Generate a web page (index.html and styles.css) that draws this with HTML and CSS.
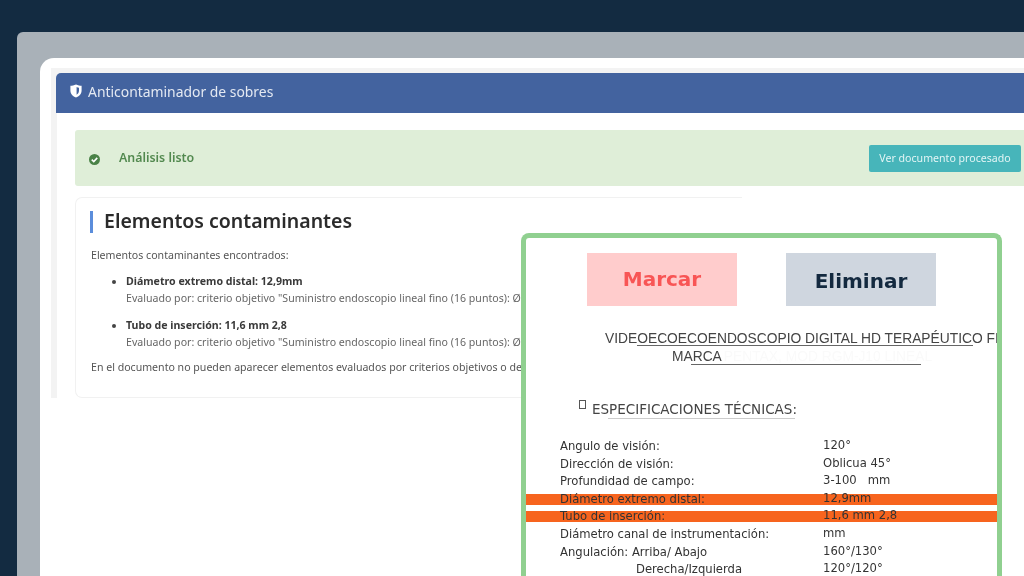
FILE: index.html
```html
<!DOCTYPE html>
<html lang="es">
<head>
<meta charset="utf-8">
<title>Anticontaminador de sobres</title>
<link rel="stylesheet" href="styles.css">
</head>
<body>
<div class="backdrop">
  <div class="sheet">
    <div class="frame">
      <header class="bar">
        <svg class="shield soft" viewBox="0 0 12 14" width="12" height="14"><path d="M6 0.5 C8 1.4 10 1.8 11.6 1.8 V6.5 C11.6 10 9 12.4 6 13.5 C3 12.4 0.4 10 0.4 6.5 V1.8 C2 1.8 4 1.4 6 0.5Z" fill="#fff"/><path d="M6.6 3 C7.4 3.4 8.2 3.7 9 3.8 V6.5 C9 8.6 7.8 10 6.6 10.8Z" fill="#43639f"/></svg>
        <span class="soft">Anticontaminador de sobres</span>
      </header>
      <main class="content">
        <section class="alert">
          <svg class="check soft" viewBox="0 0 12 12" width="11" height="11"><circle cx="6" cy="6" r="6" fill="#4a8247"/><path d="M3 6.2 L5.2 8.3 L9 4.2" fill="none" stroke="#fff" stroke-width="1.7"/></svg>
          <span class="alert-text soft">Análisis listo</span>
          <button class="view-btn soft">Ver documento procesado</button>
        </section>
        <section class="card">
          <h2 class="card-title soft">Elementos contaminantes</h2>
          <p class="intro soft">Elementos contaminantes encontrados:</p>
          <ul class="items soft">
            <li><strong>Diámetro extremo distal: 12,9mm</strong><span>Evaluado por: criterio objetivo "Suministro endoscopio lineal fino (16 puntos): Ø</span></li>
            <li><strong>Tubo de inserción: 11,6 mm 2,8</strong><span>Evaluado por: criterio objetivo "Suministro endoscopio lineal fino (16 puntos): Ø</span></li>
          </ul>
          <p class="note soft">En el documento no pueden aparecer elementos evaluados por criterios objetivos o de</p>
        </section>
      </main>
    </div>
  </div>
</div>
<aside class="popup">
  <div class="actions soft">
    <div class="act act-mark">Marcar</div>
    <div class="act act-del">Eliminar</div>
  </div>
  <div class="doc-title soft">
    <div class="t1">VIDEOECOECOENDOSCOPIO DIGITAL HD TERAPÉUTICO FI</div>
    <div class="t2">MARCA<span class="ghost">PENTAX, MOD RGM-J10 LINEAL</span></div>
  </div>
  <div class="doc-sub soft"><span class="box"></span><span class="sub-text">ESPECIFICACIONES TÉCNICAS:</span></div>
  <div class="spec soft">
    <div class="row"><span class="k">Angulo de visión:</span><span class="v">120°</span></div>
    <div class="row"><span class="k">Dirección de visión:</span><span class="v">Oblicua 45°</span></div>
    <div class="row"><span class="k">Profundidad de campo:</span><span class="v">3-100 &nbsp; mm</span></div>
    <div class="row hit"><span class="k">Diámetro extremo distal:</span><span class="v">12,9mm</span></div>
    <div class="row hit"><span class="k">Tubo de inserción:</span><span class="v">11,6 mm 2,8</span></div>
    <div class="row"><span class="k">Diámetro canal de instrumentación:</span><span class="v">mm</span></div>
    <div class="row"><span class="k">Angulación: Arriba/ Abajo</span><span class="v">160°/130°</span></div>
    <div class="row"><span class="k k-in">Derecha/Izquierda</span><span class="v">120°/120°</span></div>
  </div>
</aside>
</body>
</html>
```
FILE: styles.css
```css
* { box-sizing: border-box; }
html, body { margin: 0; height: 100%; }
body {
  width: 1024px; height: 576px; overflow: hidden; position: relative;
  background: #132b41;
  font-family: "Noto Sans", "Open Sans", sans-serif;
}
.soft { filter: blur(0.35px); }
.backdrop {
  margin: 32px 0 0 17px; height: 544px;
  background: #a9b1b8; border-radius: 6px 0 0 0;
  padding: 26px 0 0 23px;
}
.sheet {
  height: 518px; background: #fff; border-radius: 14px 0 0 0;
  padding: 10px 0 0 11px;
}
.frame {
  height: 330px; background: #f3f3f3;
  padding: 5px 0 0 5px;
  overflow: hidden;
}
.bar {
  height: 40px; background: #43639f; color: #e4e9f2;
  border-radius: 5px 0 0 0;
  display: flex; align-items: center; gap: 6px;
  padding: 0 0 4px 14px; font-size: 13.9px;
}
.content {
  height: 285px; background: #fff; margin-left: 1px;
  padding: 17px 0 0 18px;
  overflow: hidden;
}
.alert {
  height: 56px; width: 960px; background: #dfeed8;
  border-radius: 3px 0 0 3px;
  display: flex; align-items: center;
  padding: 0 14px 0 14px;
}
.check { flex: none; margin-top: 2px; }
.alert-text { margin: 0 0 2px 19px; font-size: 12.4px; font-weight: 600; color: #52894f; }
.view-btn {
  margin-left: auto; width: 152px; height: 27px;
  background: #47b5ba; color: #e2f5f5;
  border: 0; border-radius: 2px;
  font: 400 10.6px "Noto Sans", sans-serif;
  padding: 0;
}
.card {
  width: 667px; height: 201px; margin-top: 11px;
  border: 1px solid #f1f1f1; border-right: 0; border-radius: 7px 0 0 7px;
  background: #fff;
  padding: 13px 0 0 14px;
  white-space: nowrap;
}
.card-title {
  margin: 0; height: 22px;
  border-left: 3px solid #5b8ddb;
  padding-left: 11px;
  font-size: 19.5px; line-height: 20px; font-weight: 600; color: #2b2b2b;
}
.intro { margin: 14px 0 0 1px; font-size: 10.6px; line-height: 16px; color: #555; }
.items { margin: 10px 0 0; padding: 0 0 0 36px; list-style: disc; color: #444; font-size: 10.6px; }
.items li + li { margin-top: 11px; }
.items strong { display: block; line-height: 16px; font-weight: 700; color: #3a3a3a; }
.items span { display: block; margin-top: 1px; line-height: 16px; color: #666; }
.note { margin: 9px 0 0 1px; font-size: 10.6px; line-height: 16px; color: #555; }

.popup {
  position: absolute; left: 521px; top: 233px; width: 481px; height: 343px;
  border: 5px solid #90d090; border-bottom: 0;
  border-radius: 8px 8px 0 0;
  background: #fff; overflow: hidden;
}
.actions { display: flex; gap: 49px; margin: 15px 0 0 61px; }
.act {
  width: 150px; height: 53px;
  display: flex; align-items: center; justify-content: center;
  font: 700 20px "DejaVu Sans", sans-serif;
}
.act-mark { background: #ffcccc; color: #f85555; padding-bottom: 2px; }
.act-del { background: #cfd6df; color: #13293f; padding-top: 2px; }
.doc-title { margin-top: 24px; font-family: "Liberation Sans", sans-serif; font-size: 13.8px; color: #444; white-space: nowrap; }
.t1, .t2 { position: relative; line-height: 18px; }
.t1 { margin-left: 79px; }
.t2 { margin-left: 146px; }
.t1::after, .t2::after {
  content: ""; position: absolute; height: 1px; background: #666;
}
.t1::after { left: 32px; width: 336px; top: 15px; }
.t2::after { left: 19px; width: 230px; top: 16px; }
.ghost { color: #fafafa; margin-left: 2px; }
.doc-sub { display: flex; align-items: flex-start; margin: 34px 0 0 53px; position: relative; }
.doc-sub::after { content: ""; position: absolute; left: 29px; width: 187px; top: 18px; height: 1px; background: #ccc; }
.box { width: 7px; height: 9px; border: 1px solid #555; margin: 0 6px 0 0; flex: none; }
.sub-text { font: 13.5px/18px "DejaVu Sans", sans-serif; color: #444; }
.spec {
  margin-top: 23px;
  display: grid; row-gap: 6.6px;
  font: 11.6px/11px "DejaVu Sans", sans-serif; color: #333;
}
.row { height: 11px; display: flex; white-space: nowrap; padding-left: 34px; }
.hit { background: #f7641e; }
.k { width: 263px; flex: none; }
.k-in { padding-left: 76px; }
.v { position: relative; top: -1px; }
```
